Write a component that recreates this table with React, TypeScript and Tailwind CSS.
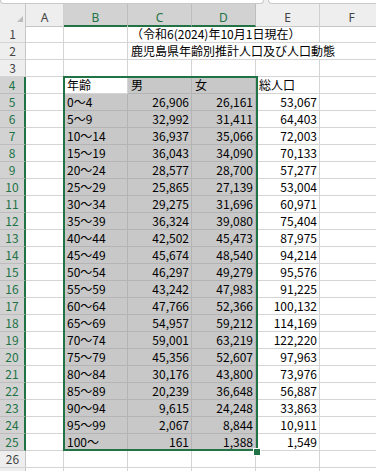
import React from "react";

const data: [string, string, string, string][] = [
  ["0～4", "26,906", "26,161", "53,067"],
  ["5～9", "32,992", "31,411", "64,403"],
  ["10～14", "36,937", "35,066", "72,003"],
  ["15～19", "36,043", "34,090", "70,133"],
  ["20～24", "28,577", "28,700", "57,277"],
  ["25～29", "25,865", "27,139", "53,004"],
  ["30～34", "29,275", "31,696", "60,971"],
  ["35～39", "36,324", "39,080", "75,404"],
  ["40～44", "42,502", "45,473", "87,975"],
  ["45～49", "45,674", "48,540", "94,214"],
  ["50～54", "46,297", "49,279", "95,576"],
  ["55～59", "43,242", "47,983", "91,225"],
  ["60～64", "47,766", "52,366", "100,132"],
  ["65～69", "54,957", "59,212", "114,169"],
  ["70～74", "59,001", "63,219", "122,220"],
  ["75～79", "45,356", "52,607", "97,963"],
  ["80～84", "30,176", "43,800", "73,976"],
  ["85～89", "20,239", "36,648", "56,887"],
  ["90～94", "9,615", "24,248", "33,863"],
  ["95～99", "2,067", "8,844", "10,911"],
  ["100～", "161", "1,388", "1,549"],
];

const cell =
  "border-r border-b border-[#d4d4d4] text-[12px] leading-[16px] whitespace-nowrap text-black";
const selCell =
  "border-r border-b border-[#b4b4b4] bg-[#c8c8c8] text-[12px] leading-[16px] whitespace-nowrap text-black";
const rhSel =
  "flex justify-center bg-[#d2d2d2] text-[#217346] border-r-2 border-r-[#217346] border-b border-b-[#bdbdbd] text-[12px] leading-[16px]";
const rhNorm =
  "flex justify-center bg-[#eeeeee] text-[#444444] border-r border-r-[#c6c6c6] border-b border-b-[#d4d4d4] text-[12px] leading-[16px]";

function RowHeader({ n }: { n: number }) {
  const sel = n >= 4 && n <= 25;
  return <div className={sel ? rhSel : rhNorm}>{n <= 26 ? n : ""}</div>;
}

export default function App() {
  const bodyRows: React.ReactNode[] = [];
  for (let r = 1; r <= 27; r++) {
    const cells: React.ReactNode[] = [];
    cells.push(<RowHeader key="h" n={r} />);
    cells.push(<div key="a" className={cell} />);
    if (r === 1) {
      cells.push(<div key="b" className={cell} />);
      cells.push(
        <div key="c" className={cell + " col-span-3 pl-[3px]"}>
          （令和6(2024)年10月1日現在）
        </div>
      );
      cells.push(<div key="f" className={cell} />);
    } else if (r === 2) {
      cells.push(<div key="b" className={cell} />);
      cells.push(
        <div key="c" className={cell + " col-span-4 pl-[3px]"}>
          鹿児島県年齢別推計人口及び人口動態
        </div>
      );
    } else if (r === 4) {
      cells.push(
        <div key="b" className={cell + " bg-white pl-[3px]"}>
          年齢
        </div>
      );
      cells.push(
        <div key="c" className={selCell + " pl-[3px]"}>
          男
        </div>
      );
      cells.push(
        <div key="d" className={selCell + " pl-[3px]"}>
          女
        </div>
      );
      cells.push(
        <div key="e" className={cell + " pl-[3px]"}>
          総人口
        </div>
      );
      cells.push(<div key="f" className={cell} />);
    } else if (r >= 5 && r <= 25) {
      const d = data[r - 5];
      cells.push(
        <div key="b" className={selCell + " pl-[3px]"}>
          {d[0]}
        </div>
      );
      cells.push(
        <div key="c" className={selCell + " text-right pr-[2px]"}>
          {d[1]}
        </div>
      );
      cells.push(
        <div key="d" className={selCell + " text-right pr-[2px]"}>
          {d[2]}
        </div>
      );
      cells.push(
        <div key="e" className={cell + " text-right pr-[2px]"}>
          {d[3]}
        </div>
      );
      cells.push(<div key="f" className={cell} />);
    } else {
      cells.push(<div key="b" className={cell} />);
      cells.push(<div key="c" className={cell} />);
      cells.push(<div key="d" className={cell} />);
      cells.push(<div key="e" className={cell} />);
      cells.push(<div key="f" className={cell} />);
    }
    bodyRows.push(<React.Fragment key={r}>{cells}</React.Fragment>);
  }

  const colHead = (label: string, sel: boolean) =>
    sel ? (
      <div
        key={label}
        className="flex justify-center pt-[7px] bg-[#d2d2d2] text-[#217346] border-r border-r-[#bdbdbd] border-b-2 border-b-[#217346] text-[12px] leading-[14px]"
      >
        {label}
      </div>
    ) : (
      <div
        key={label}
        className="flex justify-center pt-[7px] bg-[#eeeeee] text-[#444444] border-r border-r-[#d0d0d0] border-b border-b-[#c6c6c6] text-[12px] leading-[14px]"
      >
        {label}
      </div>
    );

  return (
    <div className="relative w-[376px] h-[471px] overflow-hidden bg-white font-['Noto_Sans_CJK_JP',sans-serif]">
      {/* top strip (bottom edges of name box / formula bar) */}
      <div className="flex h-[4px] bg-[#eeeeee] gap-[4px] overflow-hidden">
        <div className="w-[264px] h-[4px] bg-white border-b border-r border-[#c8c8c8] rounded-br-[4px] rounded-bl-[4px] border-l" />
        <div className="flex-1 h-[4px] bg-white border-b border-l border-[#c8c8c8] rounded-bl-[4px] mr-[-8px]" />
      </div>
      {/* column header */}
      <div className="grid grid-cols-[26px_38px_64px_64px_64px_64px_64px] h-[22px] font-['Noto_Sans',sans-serif]">
        <div className="flex items-end justify-end pr-[2px] pb-[4px] bg-[#eeeeee] border-r border-r-[#c6c6c6] border-b border-b-[#c6c6c6]">
          <svg width="6" height="6" viewBox="0 0 6 6">
            <polygon points="6,0 6,6 0,6" fill="#bcbcbc" />
          </svg>
        </div>
        {colHead("A", false)}
        {colHead("B", true)}
        {colHead("C", true)}
        {colHead("D", true)}
        {colHead("E", false)}
        {colHead("F", false)}
      </div>
      {/* body */}
      <div className="grid grid-cols-[26px_38px_64px_64px_64px_64px_64px] auto-rows-[17px]">
        {bodyRows}
      </div>
      {/* selection outline */}
      <div className="absolute left-[63px] top-[76px] w-[195px] h-[375px] border-2 border-[#217346] pointer-events-none" />
      {/* fill handle */}
      <div className="absolute left-[253px] top-[448px] w-[8px] h-[8px] bg-[#217346] border border-white" />
    </div>
  );
}
